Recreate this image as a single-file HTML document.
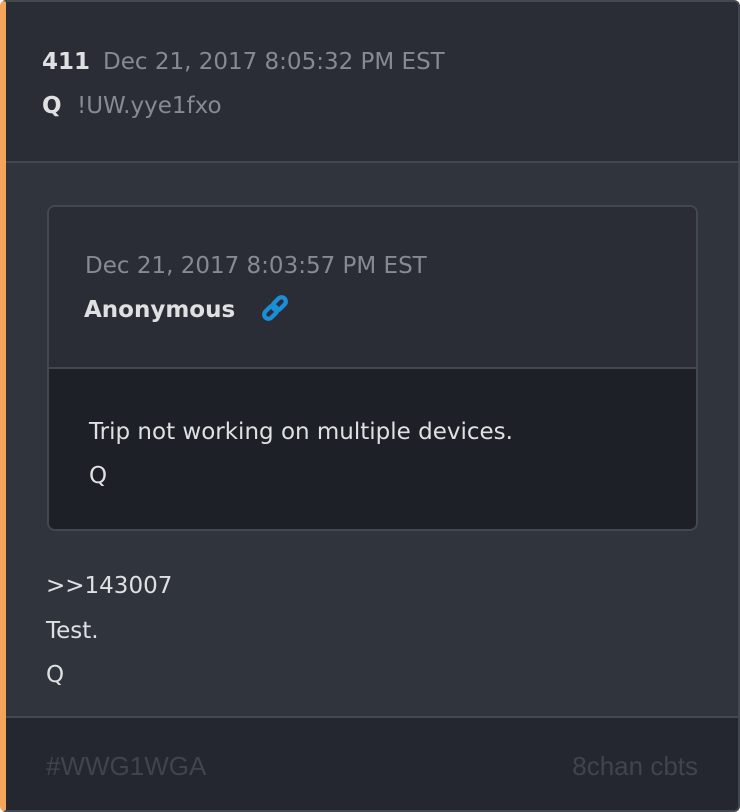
<!DOCTYPE html>
<html><head><style>
*{margin:0;padding:0;box-sizing:border-box}
body{width:740px;height:812px;background:#fff;font-family:"DejaVu Sans",sans-serif;overflow:hidden}
.card{position:absolute;left:0;top:0;width:740px;height:812px;border:2px solid #43474f;border-left:6px solid #f5a55b;border-radius:6px;background:#30343d;overflow:hidden}
.hd{position:absolute;left:0;top:0;right:0;height:161px;background:#2a2d35;border-bottom:2px solid #43474f}
.t{position:absolute;font-size:23px;white-space:nowrap;line-height:28px}
.b{font-weight:bold;color:#dfe0e2}
.g{color:#858a95}
.w{color:#dfe0e2}
.q{position:absolute;left:41px;top:203px;width:651px;height:326px;border:2px solid #43474f;border-radius:8px;overflow:hidden;background:#1e2027}
.qh{position:absolute;left:0;top:0;right:0;height:162px;background:#2a2d35;border-bottom:2px solid #43474f}
.ft{position:absolute;left:0;top:714px;right:0;bottom:0;background:#242730;border-top:2px solid #43474f}
.c{font-family:"Liberation Sans Narrow","Liberation Sans",sans-serif;color:#40444d;font-size:26px}
</style></head><body>
<div class="card">
<div class="hd">
<div class="t b" style="left:36px;top:46px">411</div>
<div class="t g" style="left:97px;top:46px">Dec 21, 2017 8:05:32 PM EST</div>
<div class="t b" style="left:36px;top:90px">Q</div>
<div class="t g" style="left:71px;top:90px">!UW.yye1fxo</div>
</div>
<div class="q">
<div class="qh">
<div class="t g" style="left:36px;top:45px">Dec 21, 2017 8:03:57 PM EST</div>
<div class="t b" style="left:35px;top:89px">Anonymous</div>
<svg style="position:absolute;left:210px;top:85px" width="32" height="32" viewBox="0 0 30 30"><g fill="none" stroke="#1a8fd8" stroke-width="4" stroke-linecap="round"><rect x="4" y="15" width="14" height="8" rx="4" transform="rotate(-45 11 19)"/><rect x="12" y="7" width="14" height="8" rx="4" transform="rotate(-45 19 11)"/></g></svg>
</div>
<div class="t w" style="left:40px;top:211px">Trip not working on multiple devices.</div>
<div class="t w" style="left:40px;top:255px">Q</div>
</div>
<div class="t w" style="left:40px;top:570px">&gt;&gt;143007</div>
<div class="t w" style="left:40px;top:615px">Test.</div>
<div class="t w" style="left:40px;top:659px">Q</div>
<div class="ft">
<div class="t c" style="left:40px;top:34px">#WWG1WGA</div>
<div class="t c" style="right:40px;top:34px">8chan cbts</div>
</div>
</div>
</body></html>
